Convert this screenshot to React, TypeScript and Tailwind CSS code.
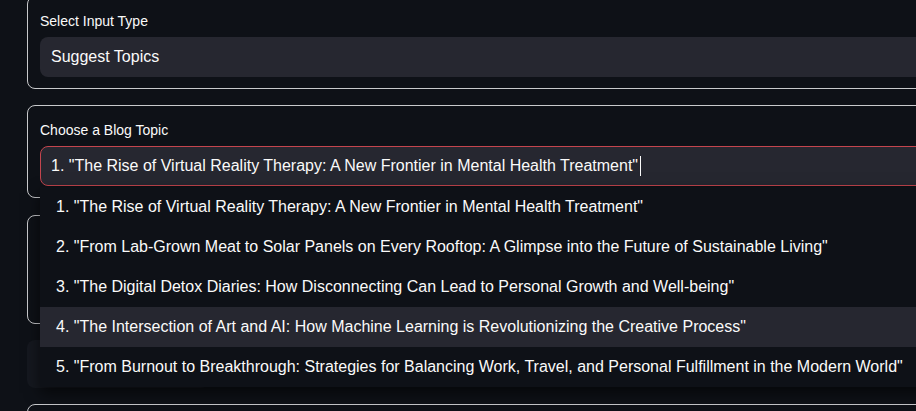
import React from 'react';

const topics = [
  '1. "The Rise of Virtual Reality Therapy: A New Frontier in Mental Health Treatment"',
  '2. "From Lab-Grown Meat to Solar Panels on Every Rooftop: A Glimpse into the Future of Sustainable Living"',
  '3. "The Digital Detox Diaries: How Disconnecting Can Lead to Personal Growth and Well-being"',
  '4. "The Intersection of Art and AI: How Machine Learning is Revolutionizing the Creative Process"',
  '5. "From Burnout to Breakthrough: Strategies for Balancing Work, Travel, and Personal Fulfillment in the Modern World"',
];

const App: React.FC = () => {
  return (
    <div className="h-[411px] w-[916px] overflow-hidden bg-[#0e1117] text-[#fafafa] font-['Liberation_Sans',Arial,sans-serif]">
      <div className="flex flex-col gap-4 pl-[27px] w-[1100px] -mt-[4px]">
        {/* input type */}
        <div className="border border-[#c8c9cc] rounded-lg pt-4 pb-[11px] px-3">
          <p className="text-sm leading-4 mb-2">Select Input Type</p>
          <div className="h-10 rounded-lg bg-[#262730] px-[11px] flex items-center text-base">
            Suggest Topics
          </div>
        </div>

        {/* blog topic */}
        <div className="relative z-10 border border-[#c8c9cc] rounded-lg pt-4 pb-[11px] px-3">
          <p className="text-sm leading-4 mb-2">Choose a Blog Topic</p>
          <div className="relative">
            <div className="h-10 rounded-lg bg-[#262730] border border-[#c4454e] px-[10px] flex items-center text-base">
              <span>{topics[0]}</span>
              <span className="ml-[2px] w-px h-5 bg-[#fafafa]"></span>
            </div>
            <ul className="absolute top-full left-0 mt-px w-full bg-[#0e1117] shadow-[0_6px_14px_rgba(0,0,0,0.6)]">
              {topics.map((t, i) => (
                <li
                  key={i}
                  className={`h-10 pl-4 flex items-center text-base whitespace-nowrap ${i === 3 ? 'bg-[#262730]' : ''}`}
                >
                  {t}
                </li>
              ))}
            </ul>
          </div>
        </div>

        {/* content panel (covered) */}
        <div className="h-[109px] border border-[#c8c9cc] rounded-lg mt-[1px]"></div>

        <div className="h-12 w-[182px] rounded-lg bg-[#15181f]"></div>

        <div className="h-20 border border-[#c8c9cc] rounded-lg"></div>
      </div>
    </div>
  );
};

export default App;
